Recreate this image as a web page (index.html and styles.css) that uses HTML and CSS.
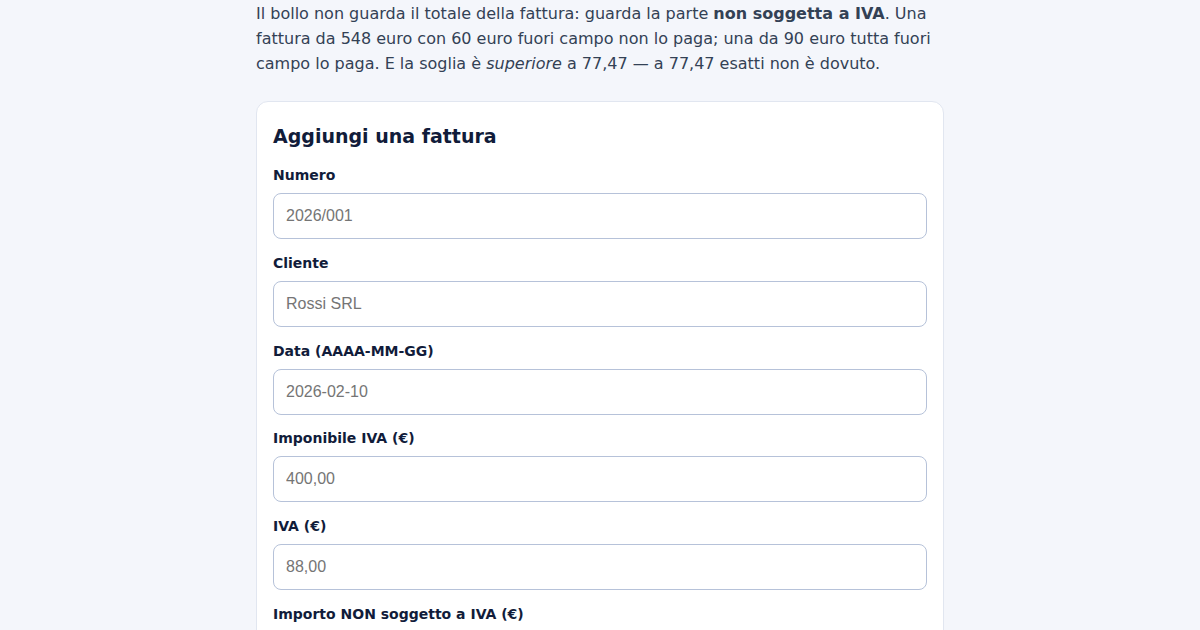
FILE: index.html
```html
<!DOCTYPE html>
<html lang="it">
<head>
<meta charset="utf-8">
<title>Bollo fatture</title>
<link rel="stylesheet" href="styles.css">
</head>
<body>
<main class="page">
  <p class="intro">Il bollo non guarda il totale della fattura: guarda la parte <strong>non soggetta a IVA</strong>. Una fattura da 548 euro con 60 euro fuori campo non lo paga; una da 90 euro tutta fuori campo lo paga. E la soglia è <em>superiore</em> a 77,47 — a 77,47 esatti non è dovuto.</p>
  <section class="card">
    <h2 class="card-title">Aggiungi una fattura</h2>
    <div class="field">
      <label class="field-label" for="numero">Numero</label>
      <input class="field-input" id="numero" type="text" placeholder="2026/001">
    </div>
    <div class="field">
      <label class="field-label" for="cliente">Cliente</label>
      <input class="field-input" id="cliente" type="text" placeholder="Rossi SRL">
    </div>
    <div class="field">
      <label class="field-label" for="data">Data (AAAA-MM-GG)</label>
      <input class="field-input" id="data" type="text" placeholder="2026-02-10">
    </div>
    <div class="field">
      <label class="field-label" for="imponibile">Imponibile IVA (€)</label>
      <input class="field-input" id="imponibile" type="text" placeholder="400,00">
    </div>
    <div class="field">
      <label class="field-label" for="iva">IVA (€)</label>
      <input class="field-input" id="iva" type="text" placeholder="88,00">
    </div>
    <div class="field">
      <label class="field-label" for="fuori">Importo NON soggetto a IVA (€)</label>
      <input class="field-input" id="fuori" type="text" placeholder="0,00">
    </div>
  </section>
</main>
</body>
</html>
```
FILE: styles.css
```css
* { box-sizing: border-box; }
html, body {
  margin: 0;
  padding: 0;
  background: #f4f6fb;
}
body {
  font-family: "DejaVu Sans", sans-serif;
  color: #334155;
}
.page {
  width: 688px;
  margin: 0 auto;
  padding-top: 1px;
}
.intro {
  margin: 0 0 25px;
  font-size: 16px;
  line-height: 25px;
  color: #334155;
}
.intro strong { font-weight: bold; }
.card {
  background: #ffffff;
  border: 1px solid #e1e6f0;
  border-radius: 12px;
  padding: 22px 16px 16px;
}
.card-title {
  margin: 0 0 17px;
  font-size: 19px;
  line-height: 24px;
  font-weight: bold;
  color: #111c3a;
}
.field {
  display: flex;
  flex-direction: column;
  margin-bottom: 13.75px;
}
.field-label {
  font-size: 14px;
  line-height: 21px;
  font-weight: bold;
  color: #111c3a;
  margin-bottom: 7px;
}
.field-input {
  height: 46px;
  width: 100%;
  padding: 0 12px;
  border: 1px solid #b6c2d9;
  border-radius: 8px;
  font-family: "Liberation Sans", Arial, sans-serif;
  font-size: 16px;
  color: #111c3a;
  background: #ffffff;
}
.field-input::placeholder { color: #757575; }
```
